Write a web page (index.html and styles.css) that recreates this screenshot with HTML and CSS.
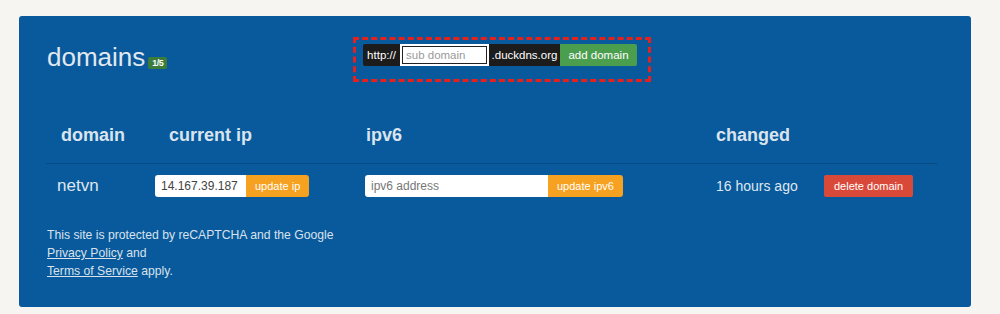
FILE: index.html
```html
<!DOCTYPE html>
<html>
  <head>
    <title>Duck DNS - domains</title>
    <link rel="stylesheet" href="styles.css">
  </head>
  <body>
    <div class="panel">
      <div class="top">
        <h1 class="title">domains<span class="badge">1/5</span></h1>
        <div class="add-box">
          <form class="add-form">
            <span class="addon addon-http">http://</span>
            <input class="sub-input" type="text" placeholder="sub domain">
            <span class="addon addon-duck">.duckdns.org</span>
            <button class="btn btn-green" type="button">add domain</button>
          </form>
        </div>
      </div>

      <div class="domains">
        <div class="row head">
          <div class="c1">domain</div>
          <div class="c2">current ip</div>
          <div class="c3">ipv6</div>
          <div class="c4">changed</div>
          <div class="c5"></div>
        </div>
        <div class="row body">
          <div class="c1 name">netvn</div>
          <div class="c2">
            <div class="group">
              <input class="ip-input" type="text" value="14.167.39.187">
              <button class="btn btn-orange" type="button">update ip</button>
            </div>
          </div>
          <div class="c3">
            <div class="group">
              <input class="ip6-input" type="text" placeholder="ipv6 address">
              <button class="btn btn-orange" type="button">update ipv6</button>
            </div>
          </div>
          <div class="c4 ago">16 hours ago</div>
          <div class="c5">
            <button class="btn btn-red" type="button">delete domain</button>
          </div>
        </div>
      </div>

      <p class="recaptcha">
        This site is protected by reCAPTCHA and the Google<br>
        <a href="#">Privacy Policy</a> and<br>
        <a href="#">Terms of Service</a> apply.
      </p>
    </div>
  </body>
</html>
```

FILE: styles.css
```css
body {
  margin: 0;
  padding: 16px 29px 7px 19px;
  background-color: #f6f5f1;
  font-family: "Liberation Sans", Arial, sans-serif;
  color: #dfe7f0;
}

.panel {
  height: 291px;
  box-sizing: border-box;
  background-color: #085a9c;
  border-radius: 3px;
  padding: 21px 0 0 28px;
}

.top {
  display: flex;
  align-items: flex-start;
}

.title {
  width: 306px;
  margin: 0;
  padding-top: 5px;
  font-size: 26px;
  font-weight: normal;
  line-height: 30px;
  color: #e2e8ef;
}

.badge {
  display: inline-block;
  margin-left: 3px;
  padding: 0 4px;
  height: 12px;
  line-height: 12px;
  font-size: 9px;
  font-weight: bold;
  letter-spacing: -0.5px;
  color: #fff;
  background-color: #3b7c3b;
  border-radius: 2px;
  vertical-align: 0;
}

.add-box {
  width: 298px;
  height: 45px;
  box-sizing: border-box;
  border: 3px dashed #e5201d;
  padding: 4px 0 0 7px;
}

.add-form {
  display: flex;
  height: 22px;
  margin: 0;
}

.addon {
  background-color: #1c1c1c;
  color: #fff;
  font-size: 11.5px;
  line-height: 22px;
  text-align: center;
  white-space: nowrap;
}

.addon-http {
  width: 37px;
  border-radius: 2px 0 0 2px;
}

.addon-duck {
  width: 71px;
}

.sub-input {
  width: 89px;
  height: 22px;
  box-sizing: border-box;
  border: 2px solid #fff;
  outline: 1px solid #222;
  outline-offset: -3px;
  padding: 0 4px;
  font-family: inherit;
  font-size: 11.5px;
  background: #fff;
}

.sub-input::placeholder {
  color: #9a9a9a;
}

.btn {
  border: none;
  font-family: inherit;
  color: #fff;
  cursor: pointer;
  height: 22px;
  padding: 0 9px;
  white-space: nowrap;
}

.btn-green {
  width: 77px;
  padding: 0;
  background-color: #4c9e4f;
  font-size: 11.5px;
  border-radius: 0 2px 2px 0;
}

.btn-orange {
  background-color: #f7a120;
  font-size: 11px;
  border-radius: 0 3px 3px 0;
}

.btn-red {
  background-color: #d9493a;
  font-size: 11px;
  border-radius: 2px;
  padding: 0 10px;
}

.domains {
  width: 891px;
  margin: 43px 0 0 -1px;
}

.row {
  display: grid;
  grid-template-columns: 98px 210px 351px 108px 113px;
  padding-left: 11px;
  align-items: center;
}

.head {
  height: 38px;
  font-size: 18px;
  font-weight: bold;
  color: #dbe4ee;
  border-bottom: 1px solid #0a4a84;
  align-items: start;
}

.head .c1 {
  margin-left: 4px;
}

.head .c2 {
  margin-left: 14px;
}

.head .c3 {
  margin-left: 1px;
}

.body {
  height: 43px;
}

.name {
  font-size: 17px;
}

.ago {
  font-size: 14px;
}

.group {
  display: flex;
}

.ip-input,
.ip6-input {
  height: 22px;
  box-sizing: border-box;
  border: none;
  border-radius: 3px 0 0 3px;
  padding: 0 6px;
  font-family: inherit;
  font-size: 12px;
  color: #444;
  background: #fff;
}

.ip-input {
  width: 91px;
}

.ip6-input {
  width: 183px;
}

.ip6-input::placeholder {
  color: #777;
}

.recaptcha {
  margin: 19px 0 0;
  font-size: 12.2px;
  line-height: 18px;
  color: #d8e2ec;
}

.recaptcha a {
  color: #d8e2ec;
}
```
